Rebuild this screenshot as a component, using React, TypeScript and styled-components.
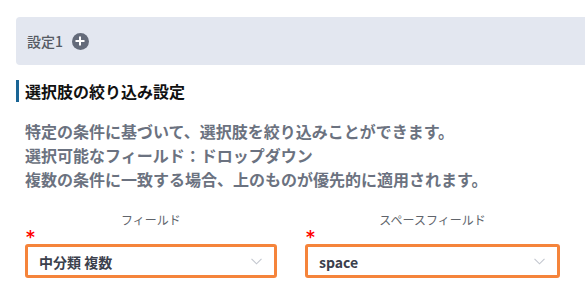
import React from "react";
import styled, { createGlobalStyle } from "styled-components";

const Global = createGlobalStyle`
  html, body { margin: 0; padding: 0; background: #fff; }
  body { font-family: "Noto Sans CJK JP", "Noto Sans", sans-serif; overflow: hidden; }
`;

const Page = styled.div`
  width: 585px;
  height: 304px;
  padding-top: 17px;
  box-sizing: border-box;
`;

const Band = styled.div`
  margin-left: 16px;
  height: 48px;
  background: #e3e7f0;
  border-radius: 4px 0 0 4px;
  display: flex;
  align-items: center;
  gap: 9px;
  padding-left: 11px;
`;

const BandTitle = styled.span`
  font-size: 14px;
  color: #555a63;
  font-weight: 500;
  line-height: 20px;
`;

const PlusIcon = styled.span`
  width: 17px;
  height: 17px;
  border-radius: 50%;
  background: #646b7a;
  position: relative;
  display: inline-block;
  &::before, &::after {
    content: "";
    position: absolute;
    background: #fff;
    left: 50%;
    top: 50%;
    transform: translate(-50%, -50%);
  }
  &::before { width: 9px; height: 2px; }
  &::after { width: 2px; height: 9px; }
`;

const SectionTitle = styled.h2`
  margin: 15px 0 0 16px;
  border-left: 3px solid #1a6595;
  padding-left: 6px;
  font-size: 16px;
  line-height: 22px;
  font-weight: 700;
  color: #111;
`;

const Description = styled.p`
  margin: 17px 0 0 25px;
  font-size: 16px;
  line-height: 24px;
  font-weight: 700;
  color: #6b7280;
`;

const Fields = styled.div`
  display: grid;
  grid-template-columns: 252px 255px;
  column-gap: 28px;
  margin: 20px 0 0 25px;
`;

const Field = styled.div`
  display: flex;
  flex-direction: column;
`;

const Label = styled.div`
  text-align: center;
  font-size: 12px;
  line-height: 18px;
  color: #60646b;
  font-weight: 400;
`;

const Required = styled.span`
  color: #ff0000;
  font-family: "DejaVu Sans", sans-serif;
  font-size: 17px;
  line-height: 17px;
  height: 15px;
  margin-left: 1px;
  font-weight: 700;
`;

const Select = styled.div`
  height: 34px;
  box-sizing: border-box;
  border: 3px solid #f5843b;
  border-radius: 3px;
  display: flex;
  align-items: center;
  justify-content: space-between;
  padding: 0 12px 0 11px;
  background: #fff;
`;

const Value = styled.span`
  font-size: 14px;
  font-weight: 700;
  color: #3b404c;
  line-height: 20px;
  padding-top: 1px;
`;

const Chevron = () => (
  <svg width="11" height="7" viewBox="0 0 11 7" fill="none">
    <path d="M0.5 0.8 L5.5 5.8 L10.5 0.8" stroke="#c3c7cf" strokeWidth="1.1" />
  </svg>
);

export default function App() {
  return (
    <Page>
      <Global />
      <Band>
        <BandTitle>設定1</BandTitle>
        <PlusIcon />
      </Band>
      <SectionTitle>選択肢の絞り込み設定</SectionTitle>
      <Description>
        特定の条件に基づいて、選択肢を絞り込みことができます。
        <br />
        選択可能なフィールド：ドロップダウン
        <br />
        複数の条件に一致する場合、上のものが優先的に適用されます。
      </Description>
      <Fields>
        <Field>
          <Label>フィールド</Label>
          <Required>*</Required>
          <Select>
            <Value>中分類 複数</Value>
            <Chevron />
          </Select>
        </Field>
        <Field>
          <Label>スペースフィールド</Label>
          <Required>*</Required>
          <Select>
            <Value>space</Value>
            <Chevron />
          </Select>
        </Field>
      </Fields>
    </Page>
  );
}
